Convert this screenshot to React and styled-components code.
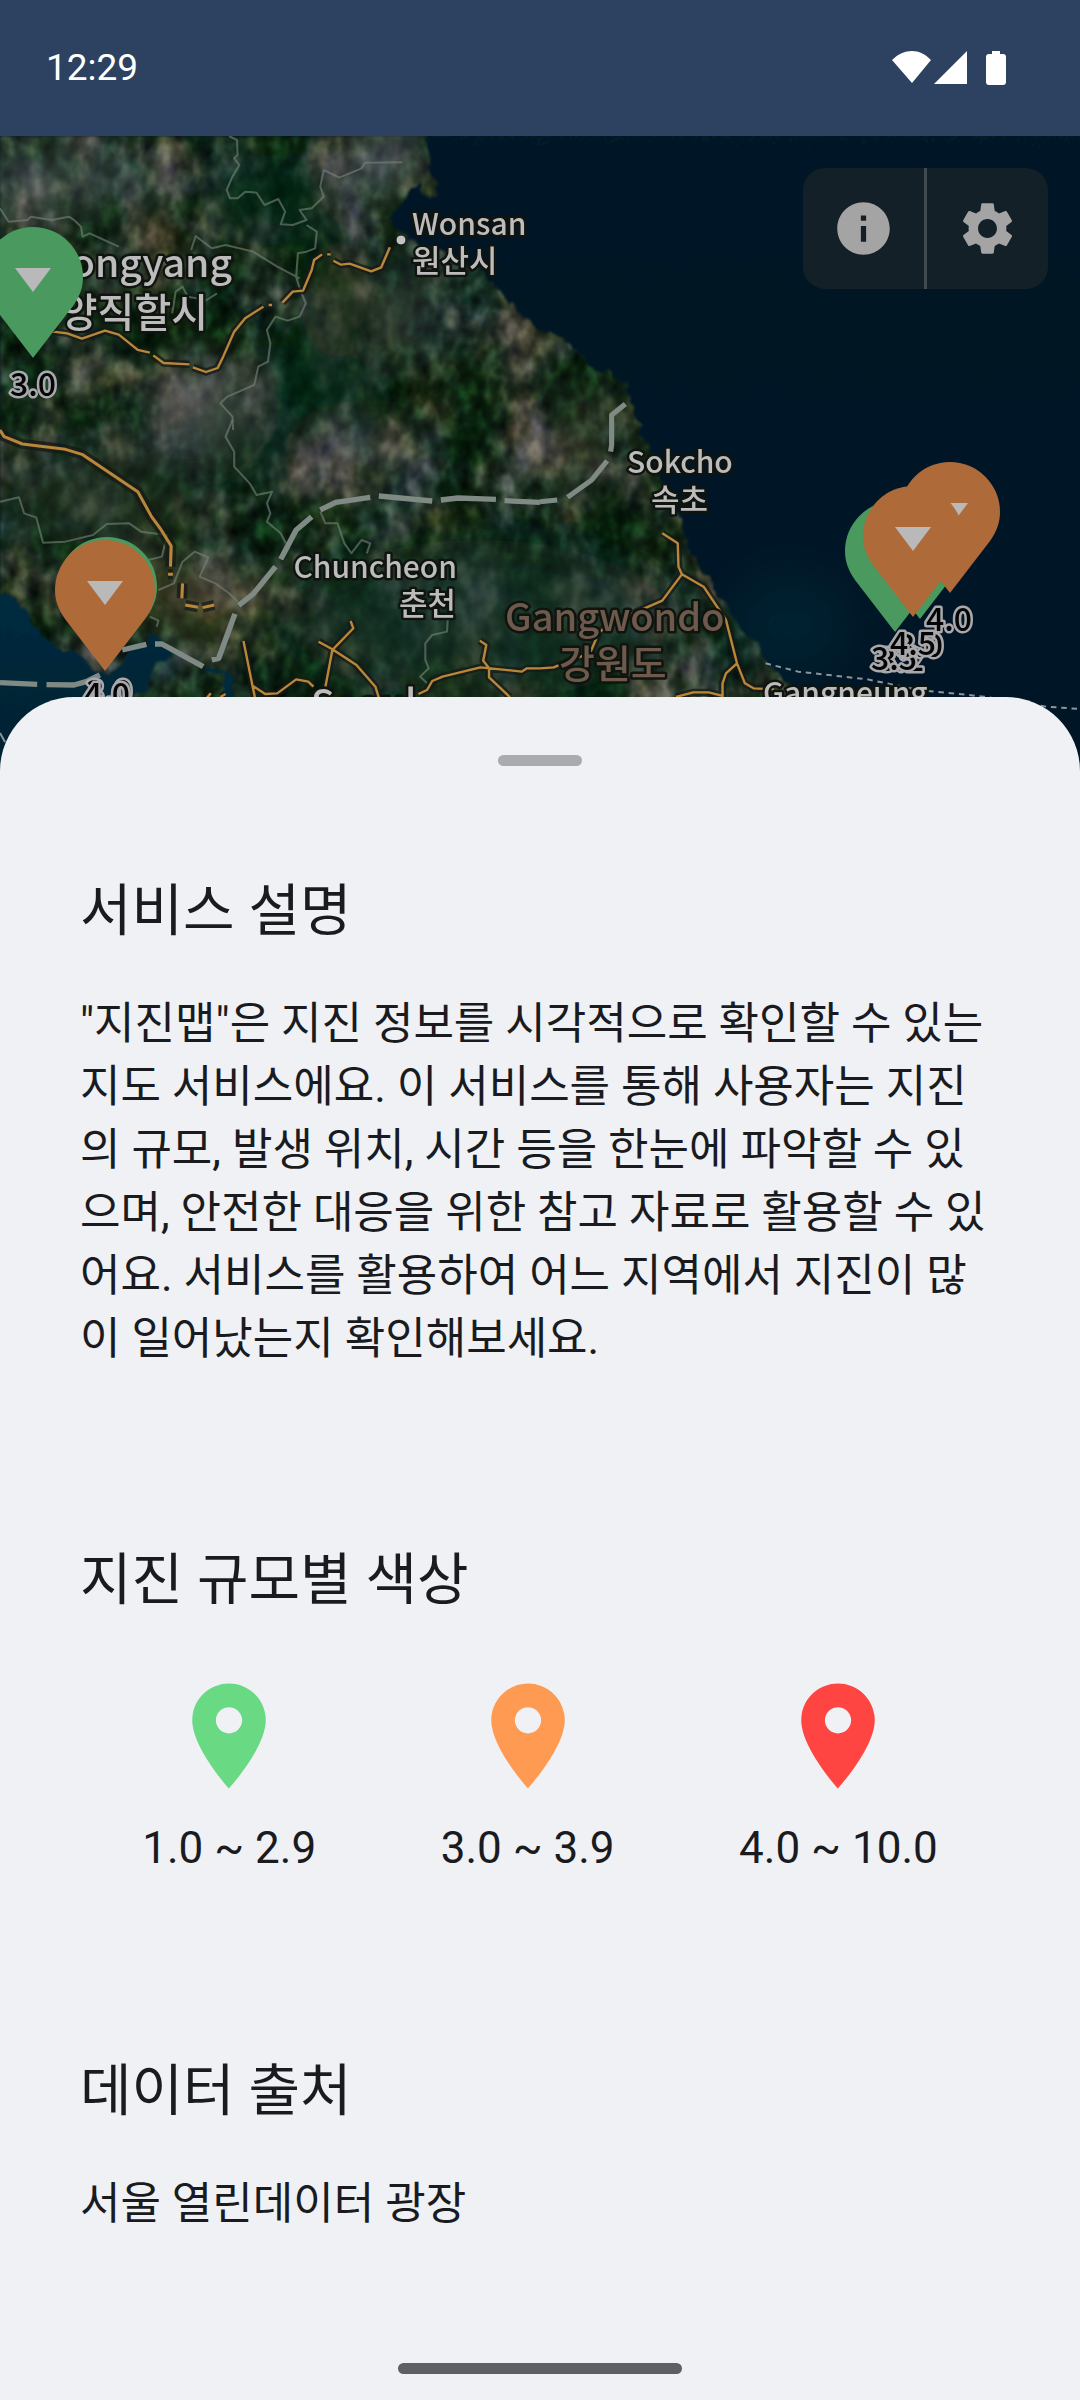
import React from "react";
import styled, { createGlobalStyle } from "styled-components";
import { MdInfo, MdSettings } from "react-icons/md";

const GlobalStyle = createGlobalStyle`
  *, *::before, *::after { box-sizing: border-box; }
  body {
    margin: 0;
    background: #eff1f5;
    font-family: Roboto, "Noto Sans CJK KR", sans-serif;
  }
`;

const Screen = styled.div`
  display: flex;
  flex-direction: column;
  min-height: 100vh;
  background: #eff1f5;
  color: #1a1b1f;
`;

const StatusBar = styled.header`
  display: flex;
  align-items: center;
  justify-content: space-between;
  height: 136px;
  padding: 0 72px 0 46px;
  background: #2d4160;
  color: #fff;
`;

const Clock = styled.time`
  font-size: 37px;
  line-height: 48px;
`;

const StatusIcons = styled.svg`
  display: block;
  width: 116px;
  height: 36px;
  fill: currentColor;
`;

const MapArea = styled.section`
  position: relative;
  height: 635px;
  overflow: hidden;
  background: #001525;
`;

const MapCanvas = styled.svg`
  display: block;
  width: 100%;
  height: 100%;
  font-family: "Noto Sans CJK KR", sans-serif;
`;

const PlaceName = styled.text`
  font-size: ${(p) => p.$size}px;
  font-weight: 500;
  fill: ${(p) => p.$color || "#bdbcbd"};
  stroke: #10140f;
  stroke-width: 5px;
  stroke-linejoin: round;
  paint-order: stroke;
`;

const Magnitude = styled.text`
  font-size: 32px;
  font-weight: 500;
  text-anchor: middle;
  fill: #050505;
  stroke: #a9a9ad;
  stroke-width: 5px;
  stroke-linejoin: round;
  paint-order: stroke;
`;

const MapActions = styled.div`
  position: absolute;
  top: 32px;
  right: 32px;
  display: flex;
  height: 121px;
  border-radius: 22px;
  overflow: hidden;
  background: #142027;
`;

const MapButton = styled.button`
  display: flex;
  align-items: center;
  justify-content: center;
  width: 121px;
  padding: 0;
  border: 0;
  background: none;
  color: #a5a4a4;

  & + & {
    width: 124px;
    border-left: 3px solid #414b4f;
  }
`;

const Sheet = styled.main`
  position: relative;
  flex: 1;
  display: flex;
  flex-direction: column;
  margin-top: -74px;
  padding: 58px 80px 26px;
  border-radius: 74px 74px 0 0;
  background: #eff1f5;
`;

const DragHandle = styled.button`
  align-self: center;
  width: 84px;
  height: 11px;
  padding: 0;
  border: 0;
  border-radius: 6px;
  background: #a9abaf;
`;

const Sections = styled.div`
  display: flex;
  flex-direction: column;
  gap: 172px;
  padding: 108px 0 72px;
`;

const Section = styled.section`
  display: flex;
  flex-direction: column;
  gap: ${(p) => (p.$loose ? 56 : 45)}px;
`;

const Title = styled.h2`
  margin: 0;
  font-size: 56px;
  font-weight: 400;
  line-height: 74px;
`;

const Body = styled.p`
  margin: 0;
  font-size: 44px;
  line-height: 63px;
`;

const Legend = styled.ul`
  display: flex;
  justify-content: space-around;
  margin: 0;
  padding: 0 0 2px;
  list-style: none;
`;

const LegendItem = styled.li`
  display: flex;
  flex-direction: column;
  align-items: center;
  gap: 18px;
`;

const LegendPin = styled.svg`
  display: block;
  width: 126px;
  height: 126px;
  fill: ${(p) => p.$color};
`;

const HomeBar = styled.div`
  align-self: center;
  width: 284px;
  height: 11px;
  margin-top: auto;
  border-radius: 6px;
  background: #5f6062;
`;

const PIN_COLORS = { green: "#4a9a60", orange: "#ae6a38" };

function Pin({ x, y, color }) {
  return (
    <g transform={`translate(${x} ${y})`}>
      <path
        fill={PIN_COLORS[color]}
        d="M0 0L-40 -52C-47 -62 -50 -71 -50 -81A50 50 0 0 1 50 -81C50 -71 47 -62 40 -52Z"
      />
      <path fill="#b9b9b9" d="M-18 -90H18L0 -66Z" />
    </g>
  );
}

const PINS = [
  { x: 33, y: 358, color: "green" },
  { x: 107, y: 668, color: "green" },
  { x: 105, y: 671, color: "orange" },
  { x: 920, y: 619, color: "green" },
  { x: 950, y: 593, color: "orange" },
  { x: 895, y: 632, color: "green" },
  { x: 913, y: 617, color: "orange" },
];

const MAGNITUDES = [
  { x: 33, y: 396, value: "3.0" },
  { x: 109, y: 703, value: "3.0" },
  { x: 107, y: 706, value: "4.0" },
  { x: 949, y: 631, value: "4.0" },
  { x: 901, y: 671, value: "3.2" },
  { x: 894, y: 670, value: "3.5" },
  { x: 920, y: 657, value: "3.0" },
  { x: 913, y: 655, value: "4.5" },
];

const NORTH = "translate(0 130) scale(.3444 .3333)";
const SOUTH_WEST = "translate(0 420) scale(.3444 .3333)";
const SOUTH_EAST = "translate(540 420) scale(.3444 .3333)";

const NORTH_BORDERS =
  "M665 18L688 30L690 75L680 85L695 105L675 140L658 180L668 205L690 205L712 185L745 188L768 225L808 207L828 245L815 283L850 285L890 270L870 240L905 235L940 200L930 170L940 120L985 143L1050 115L1060 98L1168 97M890 285L920 305L915 355L890 365L865 370L860 440L870 475L888 520L870 560L835 572L800 560L775 600L785 640L778 695L750 710L738 765L660 800L640 820L675 860L677 900M555 360L568 318L615 355L655 345L735 365L805 410L870 445M0 235L25 275L80 270L90 260L150 270L200 260L215 270L235 290L240 320L260 310L345 350M500 550L510 485L530 470L545 500L600 510L630 490";
const SOUTH_BORDERS =
  "M675 0L655 50L680 95L680 140L725 190L745 225L790 215L775 250L785 280L775 305L815 340L830 370M0 245L55 232L70 280L105 292L125 368L190 365L270 345L310 312L375 310L410 335L485 345L470 410L430 420M930 275L945 310L980 310L1000 370L1020 400L1050 360L1075 370L1065 400M460 510L505 490L530 425L565 395L605 412L580 470L625 490L665 520L690 545M1300 600L1298 635L1255 645L1235 670L1235 720L1245 745L1220 770L1240 790M435 590L460 602L455 620";

const NORTH_ROADS =
  "M120 600L155 605L195 610L238 626L305 602L345 614L400 660L435 668M445 676L475 699L550 703M560 712L598 726L632 714L648 680L680 605L712 565L765 530M780 525L790 525M820 518L850 485L880 482L905 420L912 390L935 373M950 373L960 373M968 392L990 404L1015 401L1078 424L1107 412L1132 352";
const WEST_ROADS =
  "M0 30L12 50L65 72L190 88L238 103L400 215L440 290L465 325L497 378L495 440M488 463L502 463M530 490L528 535M538 555L575 562M588 563L622 555";
const SEOUL_ROADS =
  "M707 663L733 797L770 822L805 820L860 778L895 785L910 800M733 797L740 831M925 665L965 688L1035 735L1090 800L1105 850M1018 603L1026 625L965 690L945 800M1393 662L1412 675L1403 722L1420 745L1420 772L1480 831M1215 822L1240 810L1255 783L1285 770L1395 742L1515 755L1530 745L1568 745M600 835L612 820M640 831L655 822";
const EAST_ROADS =
  "M0 745L40 742L90 720L145 700L170 640L200 610L310 562L355 542L412 463M355 340L400 370L402 440L412 463L475 500L540 600L572 730L595 790L620 805L680 808M572 730L540 760L530 790L530 831M395 831L445 817L490 817L530 828";

const DMZ_WEST =
  "M0 788L108 793M135 794L215 795L250 785L290 765M355 690L425 673M450 672L470 672L590 740M615 720L635 715L682 582M693 556L735 522L800 440M815 418L860 330L905 290M930 270L975 247L1075 232M1100 228L1255 243M1280 240L1330 234L1440 238M1465 242L1568 247";
const DMZ_EAST = "M0 245L50 240M80 232L150 180L195 122M205 95L208 75L208 -15L248 -48";

function Roads({ d, width = 7, casing = 22 }) {
  return (
    <>
      <path d={d} stroke="#151a16" strokeOpacity=".75" strokeWidth={casing} />
      <path d={d} stroke="#b9873a" strokeWidth={width} />
    </>
  );
}

function EarthquakeMap() {
  return (
    <MapCanvas viewBox="0 136 1080 635" preserveAspectRatio="xMidYMin slice" role="img" aria-label="지진 지도">
      <defs>
        <filter id="terrain" x="0" y="0" width="100%" height="100%" colorInterpolationFilters="sRGB">
          <feTurbulence type="fractalNoise" baseFrequency=".016 .014" numOctaves="5" seed="23" result="patches" />
          <feColorMatrix
            in="patches"
            values="1.5 .5 0 0 -.58  1.6 .2 0 0 -.48  1.5 0 .5 0 -.58  0 0 0 0 1"
            result="tone"
          />
          <feComponentTransfer in="tone" result="colour">
            <feFuncR type="table" tableValues=".03 .05 .1 .19 .28 .36" />
            <feFuncG type="table" tableValues=".12 .14 .18 .23 .29 .35" />
            <feFuncB type="table" tableValues=".05 .07 .12 .18 .26 .36" />
          </feComponentTransfer>
          <feTurbulence type="fractalNoise" baseFrequency=".07 .05" numOctaves="4" seed="4" result="relief" />
          <feColorMatrix
            in="relief"
            values="1.3 0 0 0 -.15  1.2 0 .1 0 -.15  1.1 .2 0 0 -.15  0 0 0 0 1"
            result="shade"
          />
          <feBlend in="shade" in2="colour" mode="soft-light" />
          <feGaussianBlur stdDeviation=".8" />
        </filter>
        <filter id="soft" x="-50%" y="-50%" width="200%" height="200%">
          <feGaussianBlur stdDeviation="22" />
        </filter>
        <filter id="shore" x="-5%" y="-5%" width="110%" height="110%">
          <feTurbulence type="fractalNoise" baseFrequency=".08" numOctaves="2" seed="2" />
          <feDisplacementMap in="SourceGraphic" scale="12" xChannelSelector="R" yChannelSelector="G" />
          <feGaussianBlur stdDeviation="1" />
        </filter>
        <linearGradient id="eastSea" x1="0" y1="0" x2="0" y2="1">
          <stop offset="0" stopColor="#001a26" />
          <stop offset=".3" stopColor="#001424" />
          <stop offset="1" stopColor="#001628" />
        </linearGradient>
        <linearGradient id="westSea" x1="0" y1="0" x2="0" y2="1">
          <stop offset="0" stopColor="#032b40" />
          <stop offset="1" stopColor="#00202e" />
        </linearGradient>
      </defs>

      <rect y="136" width="1080" height="635" filter="url(#terrain)" />

      {/* lowland haze and deep forest */}
      <g filter="url(#soft)">
        <ellipse cx="60" cy="180" rx="90" ry="36" fill="#5a625c" opacity=".4" />
        <ellipse cx="385" cy="160" rx="42" ry="40" fill="#6a6c70" opacity=".45" />
        <ellipse cx="200" cy="410" rx="45" ry="42" fill="#6a6a72" opacity=".55" />
        <ellipse cx="408" cy="310" rx="18" ry="40" fill="#70727a" opacity=".5" />
        <ellipse cx="370" cy="455" rx="60" ry="20" fill="#66666c" opacity=".35" />
        <ellipse cx="195" cy="600" rx="60" ry="40" fill="#5e5238" opacity=".45" />
        <ellipse cx="100" cy="500" rx="100" ry="60" fill="#22331f" opacity=".5" />
        <ellipse cx="270" cy="200" rx="70" ry="46" fill="#0a2610" opacity=".6" />
        <ellipse cx="340" cy="300" rx="40" ry="60" fill="#0a2a14" opacity=".65" />
        <ellipse cx="320" cy="380" rx="70" ry="40" fill="#0a2a18" opacity=".6" />
        <ellipse cx="250" cy="450" rx="40" ry="34" fill="#0a2a14" opacity=".6" />
        <ellipse cx="480" cy="620" rx="190" ry="80" fill="#16302a" opacity=".6" />
        <ellipse cx="580" cy="440" rx="30" ry="60" fill="#4a4630" opacity=".35" />
      </g>

      <g filter="url(#shore)">
        <path
          fill="url(#eastSea)"
          d="M427 120L430 163L437 195L424 196L416 182L404 200L392 210L393 227L412 240L440 250L484 273L501 293L521 313L543 333L559 335L572 347L590 368L607 370L628 387L630 403L641 430L648 447L664 483L683 523L686 547L700 567L724 603L741 627L765 657L786 680L812 710L840 790L1100 790L1100 120Z"
        />
        <path
          fill="url(#westSea)"
          d="M-20 588L4 592L25 607L38 633L59 650L76 652L94 668L108 676L128 656L150 634L163 642L172 656L156 664L146 690L130 700L114 790L-20 790Z"
        />
        <path fill="none" stroke="#032b3c" strokeWidth="6" d="M205 668L228 672L226 700" />
      </g>
      <ellipse cx="790" cy="625" rx="60" ry="50" fill="#01303c" opacity=".4" filter="url(#soft)" />

      <g fill="none" stroke="#76867a" strokeOpacity=".6" strokeWidth="6" strokeLinejoin="round">
        <path transform={NORTH} d={NORTH_BORDERS} />
        <path transform={SOUTH_WEST} d={SOUTH_BORDERS} />
      </g>

      <g fill="none" strokeLinejoin="round">
        <g transform={NORTH}>
          <Roads d={NORTH_ROADS} />
        </g>
        <g transform={SOUTH_WEST}>
          <Roads d={WEST_ROADS} width={9} casing={30} />
          <Roads d={SEOUL_ROADS} />
          <path d={DMZ_WEST} stroke="#7f8a84" strokeWidth="16" />
        </g>
        <g transform={SOUTH_EAST}>
          <Roads d={EAST_ROADS} />
          <path d={DMZ_EAST} stroke="#7f8a84" strokeWidth="15" />
          <path
            d="M655 730L750 755L950 778L1100 810L1290 830L1470 860L1568 867"
            stroke="#8a969e"
            strokeWidth="6"
            strokeDasharray="16 14"
          />
        </g>
        <path d="M0 733L5 742" stroke="#8a969e" strokeWidth="2" />
      </g>

      <circle cx="401" cy="240" r="5" fill="#c4c3c4" stroke="#10140f" strokeWidth="1" />
      <PlaceName x="412" y="235" $size={30}>Wonsan</PlaceName>
      <PlaceName x="412" y="272" $size={31}>원산시</PlaceName>
      <PlaceName x="232" y="277" $size={39} textAnchor="end">Pyongyang</PlaceName>
      <PlaceName x="208" y="327" $size={40} textAnchor="end">평양직할시</PlaceName>
      <PlaceName x="627" y="473" $size={30}>Sokcho</PlaceName>
      <PlaceName x="651" y="511" $size={31}>속초</PlaceName>
      <PlaceName x="457" y="578" $size={30} textAnchor="end">Chuncheon</PlaceName>
      <PlaceName x="456" y="615" $size={31} textAnchor="end">춘천</PlaceName>
      <PlaceName x="505" y="631" $size={38} $color="#6e5a4c">Gangwondo</PlaceName>
      <PlaceName x="559" y="678" $size={39} $color="#6e5a4c">강원도</PlaceName>
      <PlaceName x="311" y="718" $size={39}>Seoul</PlaceName>
      <PlaceName x="763" y="704" $size={30}>Gangneung</PlaceName>

      {PINS.map((p) => (
        <Pin key={`${p.x}-${p.y}`} {...p} />
      ))}
      {MAGNITUDES.map((m) => (
        <Magnitude key={`${m.x}-${m.y}`} x={m.x} y={m.y}>
          {m.value}
        </Magnitude>
      ))}
    </MapCanvas>
  );
}

const LEGEND = [
  { color: "#69d983", label: "1.0 ~ 2.9" },
  { color: "#ff9a52", label: "3.0 ~ 3.9" },
  { color: "#ff4542", label: "4.0 ~ 10.0" },
];

export default function App() {
  return (
    <Screen>
      <GlobalStyle />
      <StatusBar>
        <Clock>12:29</Clock>
        <StatusIcons viewBox="0 0 116 36" aria-hidden="true">
          <path d="M20 33L0 10C6 4 13 1 20 1S33 4 39 10Z" />
          <path d="M75 1V34H42Z" />
          <path d="M100 1H108V4H111C113 4 114 5 114 7V32C114 34 113 35 111 35H97C95 35 94 34 94 32V7C94 5 95 4 97 4H100Z" />
        </StatusIcons>
      </StatusBar>

      <MapArea>
        <EarthquakeMap />
        <MapActions>
          <MapButton type="button" aria-label="서비스 정보">
            <MdInfo size={63} />
          </MapButton>
          <MapButton type="button" aria-label="설정">
            <MdSettings size={63} />
          </MapButton>
        </MapActions>
      </MapArea>

      <Sheet>
        <DragHandle type="button" aria-label="닫기" />
        <Sections>
          <Section>
            <Title>서비스 설명</Title>
            <Body>
              "지진맵"은 지진 정보를 시각적으로 확인할 수 있는 지도 서비스에요. 이 서비스를 통해 사용자는 지진의 규모,
              발생 위치, 시간 등을 한눈에 파악할 수 있으며, 안전한 대응을 위한 참고 자료로 활용할 수 있어요. 서비스를
              활용하여 어느 지역에서 지진이 많이 일어났는지 확인해보세요.
            </Body>
          </Section>
          <Section $loose>
            <Title>지진 규모별 색상</Title>
            <Legend>
              {LEGEND.map((item) => (
                <LegendItem key={item.label}>
                  <LegendPin viewBox="0 0 24 24" $color={item.color} aria-hidden="true">
                    <path d="M12 2C8.13 2 5 5.13 5 9c0 5.25 7 13 7 13s7-7.75 7-13c0-3.87-3.13-7-7-7zm0 9.5c-1.38 0-2.5-1.12-2.5-2.5s1.12-2.5 2.5-2.5 2.5 1.12 2.5 2.5-1.12 2.5-2.5 2.5z" />
                  </LegendPin>
                  <Body>{item.label}</Body>
                </LegendItem>
              ))}
            </Legend>
          </Section>
          <Section>
            <Title>데이터 출처</Title>
            <Body>서울 열린데이터 광장</Body>
          </Section>
        </Sections>
        <HomeBar />
      </Sheet>
    </Screen>
  );
}
